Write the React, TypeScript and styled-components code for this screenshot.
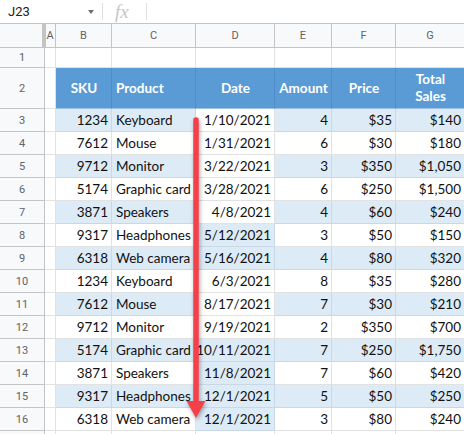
import * as React from 'react';
import styled, { createGlobalStyle } from 'styled-components';

const COLUMN_WIDTHS = [45, 11, 56, 84, 79, 57, 64, 69];
const GRID_TEMPLATE = COLUMN_WIDTHS.map((w) => `${w}px`).join(' ');

interface SaleRow {
    sku: string;
    product: string;
    date: string;
    amount: string;
    price: string;
    total: string;
    dateBand: boolean;
}

const ROWS: SaleRow[] = [
    { sku: '1234', product: 'Keyboard', date: '1/10/2021', amount: '4', price: '$35', total: '$140', dateBand: false },
    { sku: '7612', product: 'Mouse', date: '1/31/2021', amount: '6', price: '$30', total: '$180', dateBand: false },
    { sku: '9712', product: 'Monitor', date: '3/22/2021', amount: '3', price: '$350', total: '$1,050', dateBand: false },
    { sku: '5174', product: 'Graphic card', date: '3/28/2021', amount: '6', price: '$250', total: '$1,500', dateBand: false },
    { sku: '3871', product: 'Speakers', date: '4/8/2021', amount: '4', price: '$60', total: '$240', dateBand: false },
    { sku: '9317', product: 'Headphones', date: '5/12/2021', amount: '3', price: '$50', total: '$150', dateBand: true },
    { sku: '6318', product: 'Web camera', date: '5/16/2021', amount: '4', price: '$80', total: '$320', dateBand: true },
    { sku: '1234', product: 'Keyboard', date: '6/3/2021', amount: '8', price: '$35', total: '$280', dateBand: false },
    { sku: '7612', product: 'Mouse', date: '8/17/2021', amount: '7', price: '$30', total: '$210', dateBand: false },
    { sku: '9712', product: 'Monitor', date: '9/19/2021', amount: '2', price: '$350', total: '$700', dateBand: false },
    { sku: '5174', product: 'Graphic card', date: '10/11/2021', amount: '7', price: '$250', total: '$1,750', dateBand: true },
    { sku: '3871', product: 'Speakers', date: '11/8/2021', amount: '7', price: '$60', total: '$420', dateBand: true },
    { sku: '9317', product: 'Headphones', date: '12/1/2021', amount: '5', price: '$50', total: '$250', dateBand: true },
    { sku: '6318', product: 'Web camera', date: '12/1/2021', amount: '3', price: '$80', total: '$240', dateBand: true },
];

const App: React.FC = () => (
    <Root>
        <GlobalStyle />
        <FormulaBar>
            <NameBox>
                J23
                <DropArrow />
            </NameBox>
            <Divider />
            <FxLabel>fx</FxLabel>
            <Divider />
        </FormulaBar>

        <Sheet>
            <Row $height={24}>
                <Corner />
                {['A', 'B', 'C', 'D', 'E', 'F', 'G'].map((letter) => (
                    <ColumnHead key={letter}>{letter}</ColumnHead>
                ))}
            </Row>

            <Row $height={20}>
                <RowNum>1</RowNum>
                {Array.from({ length: 7 }).map((_, i) => (
                    <Cell key={i} />
                ))}
            </Row>

            <Row $height={41}>
                <RowNum>2</RowNum>
                <Cell />
                <HeadCell $align="center">SKU</HeadCell>
                <HeadCell $align="left">Product</HeadCell>
                <HeadCell $align="center">Date</HeadCell>
                <HeadCell $align="center">Amount</HeadCell>
                <HeadCell $align="center">Price</HeadCell>
                <HeadCell $align="center">
                    Total
                    <br />
                    Sales
                </HeadCell>
            </Row>

            {ROWS.map((row, i) => {
                const band = i % 2 === 0;
                return (
                    <Row key={i} $height={23}>
                        <RowNum>{i + 3}</RowNum>
                        <Cell />
                        <Cell $band={band} $align="right">
                            {row.sku}
                        </Cell>
                        <Cell $band={band}>{row.product}</Cell>
                        <Cell $band={row.dateBand} $align="right">
                            {row.date}
                        </Cell>
                        <Cell $band={band} $align="right">
                            {row.amount}
                        </Cell>
                        <Cell $band={band} $align="right">
                            {row.price}
                        </Cell>
                        <Cell $band={band} $align="right">
                            {row.total}
                        </Cell>
                    </Row>
                );
            })}

            {/* row 17 only peeks in at the bottom edge */}
            <Row $height={23}>
                <RowNum />
                {Array.from({ length: 7 }).map((_, i) => (
                    <Cell key={i} />
                ))}
            </Row>
        </Sheet>

        <ArrowOverlay viewBox="0 0 464 434" width={464} height={434}>
            <line x1="196" y1="120" x2="196" y2="404" stroke="#f5404a" strokeWidth="5.5" strokeLinecap="round" />
            <polygon points="186.5,401 205.5,401 196,418" fill="#f5404a" />
        </ArrowOverlay>
    </Root>
);

const GlobalStyle = createGlobalStyle`
    body {
        margin: 0;
        background: #ffffff;
        font-family: Lato, "Liberation Sans", sans-serif;
    }
`;

const Root = styled.div`
    position: relative;
    width: 464px;
    height: 434px;
    overflow: hidden;
    background: #ffffff;
`;

const FormulaBar = styled.div`
    display: flex;
    align-items: center;
    height: 23px;
    border-bottom: 1px solid #c4c4c4;
    box-sizing: content-box;
`;

const NameBox = styled.div`
    display: flex;
    align-items: center;
    justify-content: space-between;
    width: 102px;
    box-sizing: border-box;
    padding: 0 8px 0 8px;
    font-family: Roboto, "Liberation Sans", sans-serif;
    font-size: 13px;
    color: #202124;
`;

const DropArrow = styled.span`
    width: 0;
    height: 0;
    border-left: 3.5px solid transparent;
    border-right: 3.5px solid transparent;
    border-top: 4px solid #6e6e6e;
    margin-top: 1px;
`;

const Divider = styled.div`
    width: 1px;
    height: 17px;
    background: #e0e0e0;
`;

const FxLabel = styled.span`
    width: 43px;
    box-sizing: border-box;
    padding-left: 12px;
    font-family: "Liberation Serif", serif;
    font-style: italic;
    font-size: 19px;
    color: #c6c6c6;
    line-height: 1;
`;

const Sheet = styled.div`
    display: flex;
    flex-direction: column;
`;

const Row = styled.div<{ $height: number }>`
    display: grid;
    grid-template-columns: ${GRID_TEMPLATE};
    height: ${(p) => p.$height}px;
`;

const Corner = styled.div`
    background: #f8f9fa;
    border-bottom: 1px solid #c4c4c4;
    border-right: 4px solid #c4c4c4;
    margin-right: -1px;
    position: relative;
    z-index: 1;
`;

const ColumnHead = styled.div`
    display: flex;
    align-items: center;
    justify-content: center;
    background: #f8f9fa;
    border-right: 1px solid #c4c4c4;
    border-bottom: 1px solid #c4c4c4;
    font-family: Roboto, "Liberation Sans", sans-serif;
    font-size: 11px;
    color: #5f6368;
    overflow: hidden;
`;

const RowNum = styled.div`
    display: flex;
    align-items: center;
    justify-content: center;
    background: #f8f9fa;
    border-right: 1px solid #c4c4c4;
    border-bottom: 1px solid #c4c4c4;
    font-family: Roboto, "Liberation Sans", sans-serif;
    font-size: 11px;
    color: #5f6368;
`;

const Cell = styled.div<{ $band?: boolean; $align?: 'left' | 'right' | 'center' }>`
    display: flex;
    align-items: center;
    justify-content: ${(p) => (p.$align === 'right' ? 'flex-end' : p.$align === 'center' ? 'center' : 'flex-start')};
    padding: 0 3px 0 4px;
    background: ${(p) => (p.$band ? '#ddebf7' : '#ffffff')};
    border-right: 1px solid ${(p) => (p.$band ? '#c9d8e6' : '#e2e2e2')};
    border-bottom: 1px solid ${(p) => (p.$band ? '#c9d8e6' : '#e2e2e2')};
    font-size: 13.5px;
    color: #111111;
    white-space: nowrap;
    overflow: hidden;
`;

const HeadCell = styled.div<{ $align: 'left' | 'center' }>`
    display: flex;
    align-items: center;
    justify-content: ${(p) => (p.$align === 'center' ? 'center' : 'flex-start')};
    text-align: ${(p) => p.$align};
    padding: 0 3px 0 4px;
    background: #5b9bd5;
    border-right: 1px solid #4f8dc7;
    border-bottom: 1px solid #9fc2e3;
    font-size: 13.5px;
    font-weight: 700;
    line-height: 17px;
    color: #ffffff;
    overflow: hidden;
`;

const ArrowOverlay = styled.svg`
    position: absolute;
    left: 0;
    top: 0;
    pointer-events: none;
    filter: drop-shadow(1px 2px 2px rgba(0, 0, 0, 0.35));
`;

export default App;
